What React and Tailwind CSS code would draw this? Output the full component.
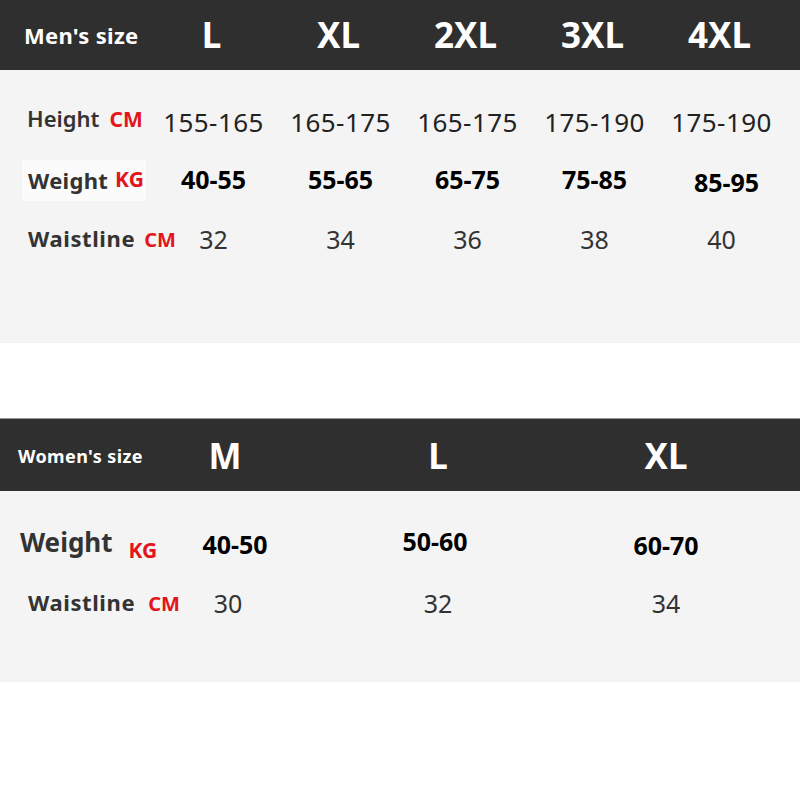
import React from "react";

const menSizes = ["L", "XL", "2XL", "3XL", "4XL"];
const menHeight = ["155-165", "165-175", "165-175", "175-190", "175-190"];
const menWeight = ["40-55", "55-65", "65-75", "75-85", "85-95"];
const menWaist = ["32", "34", "36", "38", "40"];

const womenSizes = ["M", "L", "XL"];
const womenWeight = ["40-50", "50-60", "60-70"];
const womenWaist = ["30", "32", "34"];

const Unit = ({ children, className = "" }) => (
  <span className={`font-bold text-[#e3161d] ${className}`}>{children}</span>
);

const App = () => {
  return (
    <div className="w-[800px] h-[800px] bg-white font-['Noto_Sans',sans-serif] overflow-hidden">
      {/* Men's table */}
      <div className="grid grid-cols-[150px_repeat(5,127px)] h-[70px] bg-[#2f2f2f] text-white items-center">
        <div className="pl-[24px] text-[22px] font-bold tracking-[0.3px]">Men's size</div>
        {menSizes.map((s, i) => (
          <div key={i} className="text-center text-[35px] font-bold leading-none pb-[2px] -ml-[4px]">
            {s}
          </div>
        ))}
      </div>
      <div className="h-[273px] bg-[#f4f4f4] pt-[23px]">
        {/* Height */}
        <div className="grid grid-cols-[150px_repeat(5,127px)] h-[58px] items-center">
          <div className="pl-[27px] flex items-baseline gap-[10px] text-[#333] pb-[6px]">
            <span className="text-[22px] font-semibold">Height</span>
            <Unit className="text-[21px]">CM</Unit>
          </div>
          {menHeight.map((v, i) => (
            <div key={i} className="text-center text-[26px] text-[#222] tracking-[0.4px]">
              {v}
            </div>
          ))}
        </div>
        {/* Weight */}
        <div className="grid grid-cols-[150px_repeat(5,127px)] h-[58px] items-center">
          <div className="ml-[22px] w-[124px] h-[41px] bg-[#fbfbfb] pl-[6px] flex items-center gap-[7px] text-[#333]">
            <span className="text-[22px] font-bold tracking-[0.3px]">Weight</span>
            <Unit className="text-[21px]">KG</Unit>
          </div>
          {menWeight.map((v, i) => (
            <div
              key={i}
              className={`text-center text-[25px] font-bold text-black ${i === 4 ? "pt-[6px] pl-[10px]" : ""}`}
            >
              {v}
            </div>
          ))}
        </div>
        {/* Waistline */}
        <div className="grid grid-cols-[150px_repeat(5,127px)] h-[58px] items-center">
          <div className="pl-[28px] flex items-baseline gap-[9px] text-[#333]">
            <span className="text-[22px] font-bold tracking-[0.6px]">Waistline</span>
            <Unit className="text-[20px]">CM</Unit>
          </div>
          {menWaist.map((v, i) => (
            <div key={i} className="text-center text-[25px] text-[#333] pt-[4px]">
              {v}
            </div>
          ))}
        </div>
      </div>

      <div className="h-[75px] bg-white"></div>

      {/* Women's table */}
      <div className="grid grid-cols-[160px_136px_284px_172px] h-[73px] bg-[#2f2f2f] border-t border-[#9a9a9a] text-white items-center">
        <div className="pl-[18px] text-[18px] font-bold tracking-[0.4px] pt-[3px]">Women's size</div>
        {womenSizes.map((s, i) => (
          <div key={i} className={`text-center text-[35px] font-bold leading-none ${i === 0 ? "-ml-[6px]" : ""}`}>
            {s}
          </div>
        ))}
      </div>
      <div className="h-[191px] bg-[#f4f4f4] pt-[21px]">
        {/* Weight */}
        <div className="grid grid-cols-[160px_136px_284px_172px] h-[60px] items-center">
          <div className="pl-[20px] flex items-baseline text-[#333]">
            <span className="text-[26px] font-bold">Weight</span>
            <Unit className="text-[21px] ml-[16px] translate-y-[6px]">KG</Unit>
          </div>
          {womenWeight.map((v, i) => (
            <div
              key={i}
              className={`text-center text-[25px] font-bold text-black ${i === 0 ? "pl-[14px] pt-[6px]" : ""} ${i === 1 ? "pr-[6px]" : ""} ${i === 2 ? "pt-[8px]" : ""}`}
            >
              {v}
            </div>
          ))}
        </div>
        {/* Waistline */}
        <div className="grid grid-cols-[160px_136px_284px_172px] h-[60px] items-center">
          <div className="pl-[28px] flex items-baseline gap-[13px] text-[#333]">
            <span className="text-[22px] font-bold tracking-[0.6px]">Waistline</span>
            <Unit className="text-[20px]">CM</Unit>
          </div>
          {womenWaist.map((v, i) => (
            <div key={i} className="text-center text-[25px] text-[#333] pt-[4px]">
              {v}
            </div>
          ))}
        </div>
      </div>
    </div>
  );
};

export default App;
